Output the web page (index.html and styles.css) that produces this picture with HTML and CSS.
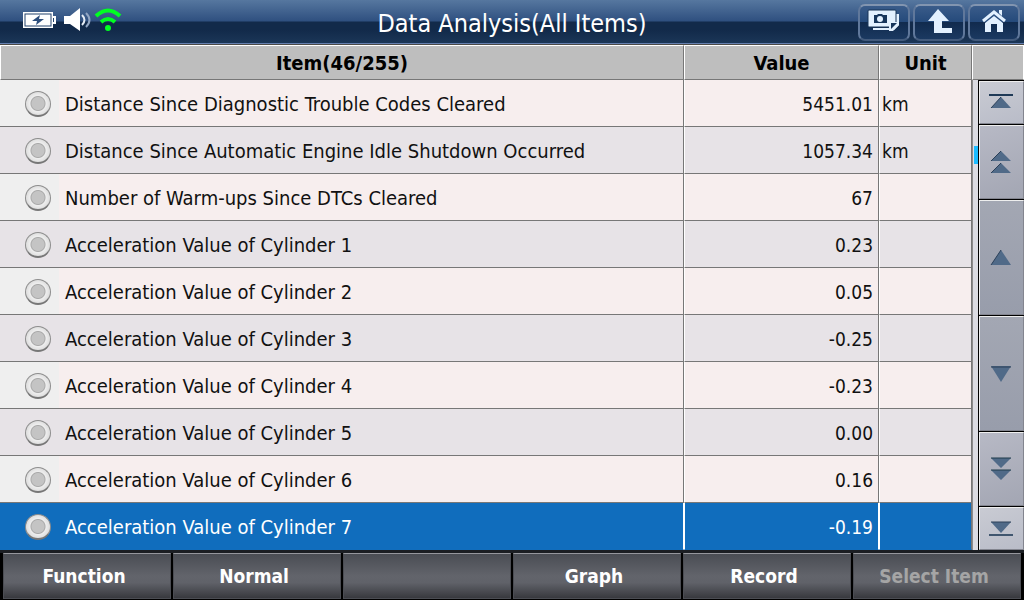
FILE: index.html
```
<!DOCTYPE html>
<html lang="en">
<head>
  <meta charset="UTF-8">
  <meta name="viewport" content="width=device-width, initial-scale=1.0">
  <title>Data Analysis</title>
  <link rel="stylesheet" href="styles.css">
</head>
<body>

  <!-- Title Bar -->
  <header class="titlebar">
    <div class="status">
      <svg class="battery" width="34" height="18" viewBox="0 0 34 18">
        <path d="M0 1h30v4h3v8h-3v4H0z" fill="#fff"/>
        <rect x="2" y="3" width="26" height="12" fill="#fff" stroke="#23426c"/>
        <rect x="30" y="7" width="1" height="4" fill="#23426c"/>
        <path d="M17 4l-8 6h5l-1 4 8-6h-5z" fill="#2b4d7c"/>
      </svg>
      <svg class="speaker" width="28" height="24" viewBox="0 0 28 24">
        <path d="M0 8h6L16 0v23L6 16H0z" fill="#fff"/>
        <path d="M18 7q5 5 0 10" fill="none" stroke="#e5ecf5" stroke-width="2"/>
        <path d="M22 5q7 7 0 14" fill="none" stroke="#92a6c3" stroke-width="2"/>
      </svg>
      <svg class="wifi" width="28" height="24" viewBox="0 0 28 24">
        <path d="M2 8q12-11 24 0M7 14q7-6 14 0" fill="none" stroke="#0f2" stroke-width="4"/>
        <circle cx="14" cy="20" r="3" fill="#0f2"/>
      </svg>
    </div>
    <h1>Data Analysis(All Items)</h1>
    <div class="tools">
      <button aria-label="Screenshot">
        <svg width="34" height="24" viewBox="0 0 34 24">
          <path d="M29 5h3v11l-5 5H6v-2h21V5z" fill="#e3f1ff"/>
          <rect x="1" y="1" width="28" height="17" rx="1" fill="#e3f1ff" stroke="#183457"/>
          <path d="M7 6h3l1-1h4l1 1h4v8H7z" fill="#17365c"/>
          <circle cx="13" cy="10" r="3" fill="#e3f1ff"/>
          <path d="M22 22v-9h10v3l-6 6z" fill="#e3f1ff"/>
          <path d="M24 20v-6h6l-6 6z" fill="#17365c"/>
        </svg>
      </button>
      <button aria-label="Back">
        <svg width="34" height="24" viewBox="0 0 34 24">
          <path d="M16 0l11 12h-7v7h10v5H12V12H6z" fill="#e3f1ff"/>
        </svg>
      </button>
      <button aria-label="Home">
        <svg width="34" height="24" viewBox="0 0 34 24">
          <path d="M6 12L17 3l11 9" fill="none" stroke="#e3f1ff" stroke-width="3"/>
          <path d="M22 1h3v6l-3-3z" fill="#e3f1ff"/>
          <path d="M8 14l9-7 9 7v9h-6v-8h-6v8H8z" fill="#e3f1ff"/>
        </svg>
      </button>
    </div>
  </header>

  <!-- Data List -->
  <main class="content">
    <table class="items">
      <thead>
        <tr><th>Item(46/255)</th><th class="col-value">Value</th><th class="col-unit">Unit</th></tr>
      </thead>
      <tbody>
        <tr>
          <td><input type="radio" name="item" id="item1"><label for="item1">Distance Since Diagnostic Trouble Codes Cleared</label></td>
          <td class="value">5451.01</td><td>km</td>
        </tr>
        <tr>
          <td><input type="radio" name="item" id="item2"><label for="item2">Distance Since Automatic Engine Idle Shutdown Occurred</label></td>
          <td class="value">1057.34</td><td>km</td>
        </tr>
        <tr>
          <td><input type="radio" name="item" id="item3"><label for="item3">Number of Warm-ups Since DTCs Cleared</label></td>
          <td class="value">67</td><td></td>
        </tr>
        <tr>
          <td><input type="radio" name="item" id="item4"><label for="item4">Acceleration Value of Cylinder 1</label></td>
          <td class="value">0.23</td><td></td>
        </tr>
        <tr>
          <td><input type="radio" name="item" id="item5"><label for="item5">Acceleration Value of Cylinder 2</label></td>
          <td class="value">0.05</td><td></td>
        </tr>
        <tr>
          <td><input type="radio" name="item" id="item6"><label for="item6">Acceleration Value of Cylinder 3</label></td>
          <td class="value">-0.25</td><td></td>
        </tr>
        <tr>
          <td><input type="radio" name="item" id="item7"><label for="item7">Acceleration Value of Cylinder 4</label></td>
          <td class="value">-0.23</td><td></td>
        </tr>
        <tr>
          <td><input type="radio" name="item" id="item8"><label for="item8">Acceleration Value of Cylinder 5</label></td>
          <td class="value">0.00</td><td></td>
        </tr>
        <tr>
          <td><input type="radio" name="item" id="item9"><label for="item9">Acceleration Value of Cylinder 6</label></td>
          <td class="value">0.16</td><td></td>
        </tr>
        <tr class="selected">
          <td><input type="radio" name="item" id="item10"><label for="item10">Acceleration Value of Cylinder 7</label></td>
          <td class="value">-0.19</td><td></td>
        </tr>
      </tbody>
    </table>

    <!-- Scroll Buttons -->
    <div class="side">
      <div class="side-head"></div>
      <div class="scroller">
        <div class="track"><div class="thumb"></div></div>
        <div class="scroll-buttons">
          <button class="small" aria-label="First">
            <svg width="24" height="16" viewBox="0 0 24 16"><path d="M0 1h24" stroke="#1f3a57" stroke-width="2"/><path d="M12 3l10 11H2z" fill="#506a88"/><path d="M12 3L2 14" stroke="#2c4058"/></svg>
          </button>
          <button class="medium" aria-label="Page up">
            <svg width="24" height="24" viewBox="0 0 24 24"><path d="M12 1l10 10H2zM12 13l10 10H2z" fill="#506a88"/><path d="M12 1L2 11M12 13L2 23" stroke="#2c4058"/></svg>
          </button>
          <button class="large" aria-label="Up">
            <svg width="24" height="16" viewBox="0 0 24 16"><path d="M12 0l10 15H2z" fill="#506a88"/><path d="M12 0L2 15" stroke="#2c4058"/></svg>
          </button>
          <button class="large" aria-label="Down">
            <svg width="24" height="16" viewBox="0 0 24 16"><path d="M2 0h20L12 16z" fill="#506a88"/><path d="M2 1h20" stroke="#2c4058"/></svg>
          </button>
          <button class="medium" aria-label="Page down">
            <svg width="24" height="24" viewBox="0 0 24 24"><path d="M2 1h20L12 11zM2 13h20L12 23z" fill="#506a88"/><path d="M2 1h20M2 13h20" stroke="#1f3a4a"/></svg>
          </button>
          <button class="small" aria-label="Last">
            <svg width="24" height="16" viewBox="0 0 24 16"><path d="M2 1h20L12 12z" fill="#506a88"/><path d="M2 1h20" stroke="#2c4058"/><path d="M0 14h24" stroke="#40566f" stroke-width="2"/></svg>
          </button>
        </div>
      </div>
    </div>
  </main>

  <!-- Bottom Menu -->
  <footer class="menu">
    <button>Function</button>
    <button>Normal</button>
    <button aria-label="Empty"></button>
    <button>Graph</button>
    <button>Record</button>
    <button disabled>Select Item</button>
  </footer>

</body>
</html>
```
FILE: styles.css
```
/* Basic styling */
* {
  box-sizing: border-box;
}

body {
  display: flex;
  flex-direction: column;
  min-height: 100vh;
  margin: 0;
  background-color: #000;
  color: #111;
  font-family: "DejaVu Sans Condensed", "DejaVu Sans", sans-serif;
  font-size: 19px;
}

button {
  margin: 0;
  padding: 0;
  font: inherit;
}

svg {
  display: block;
}

/* Title bar */
.titlebar {
  display: grid;
  grid-template-columns: 1fr auto 1fr;
  align-items: center;
  height: 45px;
  border-bottom: 1px solid #4d4a45;
  background: linear-gradient(#56779f, #2f5080 21px, #122a4a 22px, #122a4a 30px, #1b3657 43px, #6580b0 43px);
}

.status {
  display: flex;
  align-items: center;
  gap: 6px;
  padding: 0 0 4px 23px;
}

.speaker {
  margin-left: 1px;
}

.wifi {
  margin-left: -4px;
}

.titlebar h1 {
  margin: 0;
  padding-top: 2px;
  color: #fff;
  font-size: 25px;
  font-weight: normal;
}

.tools {
  display: flex;
  justify-content: flex-end;
  gap: 3px;
  padding-right: 4px;
}

.tools button {
  display: flex;
  align-items: center;
  justify-content: center;
  width: 52px;
  height: 37px;
  padding-bottom: 2px;
  border: 2px solid #6c82a2;
  border-color: #8295b0 #60789b #435b7d;
  border-radius: 7px;
  background: linear-gradient(#3a5c8a, #24497a 50%, #112b4e 50%, #1b3961);
}

/* Data list */
.content {
  display: flex;
  flex: 1;
}

.items {
  flex: 1;
  border-collapse: separate;
  border-spacing: 0;
  table-layout: fixed;
}

.col-value {
  width: 195px;
}

.col-unit {
  width: 93px;
}

th {
  height: 35px;
  padding: 0;
  border: 1px solid #777;
  border-top-color: #fff;
  border-left-color: #fff;
  background-color: #bebebe;
  color: #000;
  font-size: 20px;
}

td {
  height: 47px;
  padding: 2px 5px 0 2px;
  border-right: 1px solid #777;
  border-bottom: 1px solid #777;
  border-left: 1px solid #fff;
  background-color: #f7eeee;
  white-space: nowrap;
}

td:first-child {
  padding-left: 25px;
  border-left: 0;
  background-image: linear-gradient(90deg, #efefef 59px, transparent 59px);
}

tr:nth-child(even) td {
  background-color: #e7e3e7;
  background-image: none;
}

tbody tr.selected td {
  border-right-color: #fff;
  border-bottom-color: #106dbd;
  background-color: #106dbd;
  color: #fff;
}

th:last-child,
td:last-child,
tbody tr.selected td:last-child {
  border-right-color: #777;
}

.value {
  text-align: right;
}

td input {
  appearance: none;
  width: 26px;
  height: 26px;
  margin: 0 14px 0 0;
  border: 1px solid #8d8d8d;
  border-bottom: 2px solid #777;
  border-radius: 50%;
  background: radial-gradient(circle, #c4c4c4 6px, #aaa 7px, #eee 8px, #ddd 12px);
  vertical-align: middle;
}

td label {
  font-size: 20px;
  vertical-align: middle;
}

/* Scroll buttons */
.side {
  display: flex;
  flex-direction: column;
  width: 52px;
}

.side-head {
  height: 35px;
  border: 1px solid #fff;
  border-bottom-color: #777;
  background-color: #bebebe;
}

.scroller {
  display: flex;
  flex: 1;
}

.track {
  width: 6px;
  padding-top: 66px;
  border-left: 1px solid #8c8a8a;
  background-color: #dcdce2;
}

.thumb {
  height: 18px;
  margin-left: 1px;
  background-color: #1cbcff;
}

.scroll-buttons {
  display: flex;
  flex: 1;
  flex-direction: column;
  background-color: #000;
}

.scroll-buttons button {
  display: flex;
  align-items: center;
  justify-content: center;
  margin: 1px 0 0 1px;
  padding-right: 2px;
  border: 1px solid #83858f;
  border-top-color: #eee;
  border-left-color: #eee;
  background: linear-gradient(#a3a7b3, #989dab);
}

.scroll-buttons .small {
  flex: 42;
  background: linear-gradient(160deg, #c9cbd3, #b9bcc8);
}

.scroll-buttons .medium {
  flex: 74;
  background: linear-gradient(160deg, #b7b9c5, #a3a6b3);
}

.scroll-buttons .large {
  flex: 116;
}

/* Bottom menu */
.menu {
  display: flex;
  gap: 2px;
  height: 50px;
  padding: 3px 3px 1px;
  background: linear-gradient(#1b1e23 3px, #000 3px);
}

.menu button {
  flex: 1;
  padding-right: 6px;
  border: 1px solid #4b4d53;
  border-top-color: #96979d;
  background: linear-gradient(#4a4d54, #62646b 50%, #606269 65%, #38393e);
  color: #fff;
  font-weight: bold;
}

.menu button:disabled {
  color: #a5a5a5;
}
```
